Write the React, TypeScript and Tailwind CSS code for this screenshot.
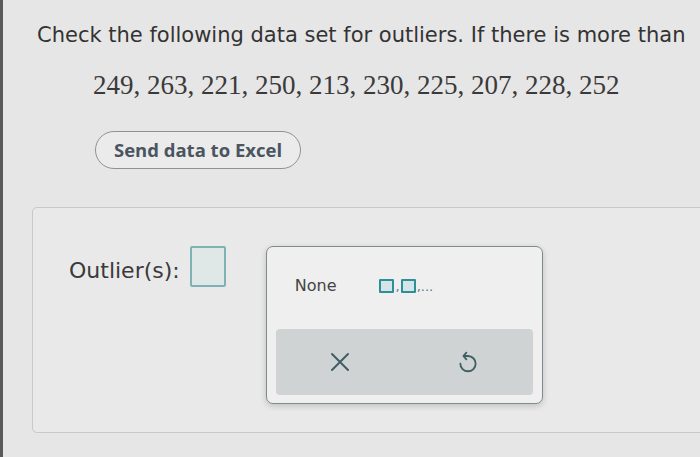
import React from 'react';

function Box() {
  return <span className="inline-block w-[15px] h-[14px] border-2 border-[#2f8f99] bg-[#d3e5e7] rounded-[1px]" />;
}

function UndoIcon() {
  return (
    <svg width="22" height="24" viewBox="0 0 20 22" fill="none" stroke="#3f5f63" strokeWidth="1.7" strokeLinecap="round" strokeLinejoin="round">
      <path d="M10 5.5 A7 7 0 1 1 3 12.5" />
      <path d="M10 5.5 H6.5" />
      <path d="M8.5 2.5 L5.8 5.5 L8.5 8.5" />
    </svg>
  );
}

export default function App() {
  return (
    <div className="w-[700px] h-[457px] overflow-hidden bg-[#e6e6e6] border-l-[3px] border-l-[#5a5a5a] font-['DejaVu_Sans',sans-serif] text-[#333]">
      {/* Question */}
      <p className="pl-[34px] pt-[21px] text-[21px] leading-[28px] whitespace-nowrap">
        Check the following data set for outliers. If there is more than
      </p>
      <p className="pl-[90px] pt-[19px] font-['Liberation_Serif',serif] text-[27px] leading-[34px] text-[#3a3a3a]">
        249, 263, 221, 250, 213, 230, 225, 207, 228, 252
      </p>
      <div className="pl-[92px] pt-[29px]">
        <button className="h-[38px] w-[206px] rounded-full border border-[#8c9297] bg-[#ebebeb] font-['Open_Sans',sans-serif] text-[18.5px] font-bold text-[#4a5560] pb-[1px]">
          Send data to Excel
        </button>
      </div>

      {/* Answer panel */}
      <div className="ml-[29px] mt-[38px] w-[720px] h-[226px] rounded-[5px] border border-[#c9c9c9] bg-[#e9e9e9] pl-[36px] pt-[38px] flex items-start">
        <span className="mt-[10px] text-[22px] leading-[30px] text-[#3a3a3a]">Outlier(s):</span>
        <span className="ml-[10px] w-[36px] h-[41px] border-2 border-[#7fb3b3] bg-[#dfe7e7] rounded-[2px]" />

        <div className="ml-[40px] w-[277px] h-[158px] rounded-[7px] border-[1.5px] border-[#7f8b8e] bg-[#efefef] shadow-[0_2px_6px_rgba(0,0,0,0.18)] px-[9px] pt-[28px] pb-[8px] flex flex-col">
          <div className="h-[22px] pl-[19px] flex items-center">
            <span className="text-[16px] text-[#444]">None</span>
            <span className="ml-[43px] flex items-end gap-[1px] text-[#4f7f86] text-[13px] leading-none">
              <Box />
              <span>,</span>
              <Box />
              <span>,...</span>
            </span>
          </div>
          <div className="mt-[32px] h-[67px] rounded-[4px] bg-[#cfd3d4] grid grid-cols-2">
            <div className="flex items-center justify-center">
              <svg width="20" height="20" viewBox="0 0 20 20" fill="none" stroke="#3f5f63" strokeWidth="2" strokeLinecap="round">
                <path d="M2 2 L18 18 M18 2 L2 18" />
              </svg>
            </div>
            <div className="flex items-center justify-center">
              <UndoIcon />
            </div>
          </div>
        </div>
      </div>
    </div>
  );
}
